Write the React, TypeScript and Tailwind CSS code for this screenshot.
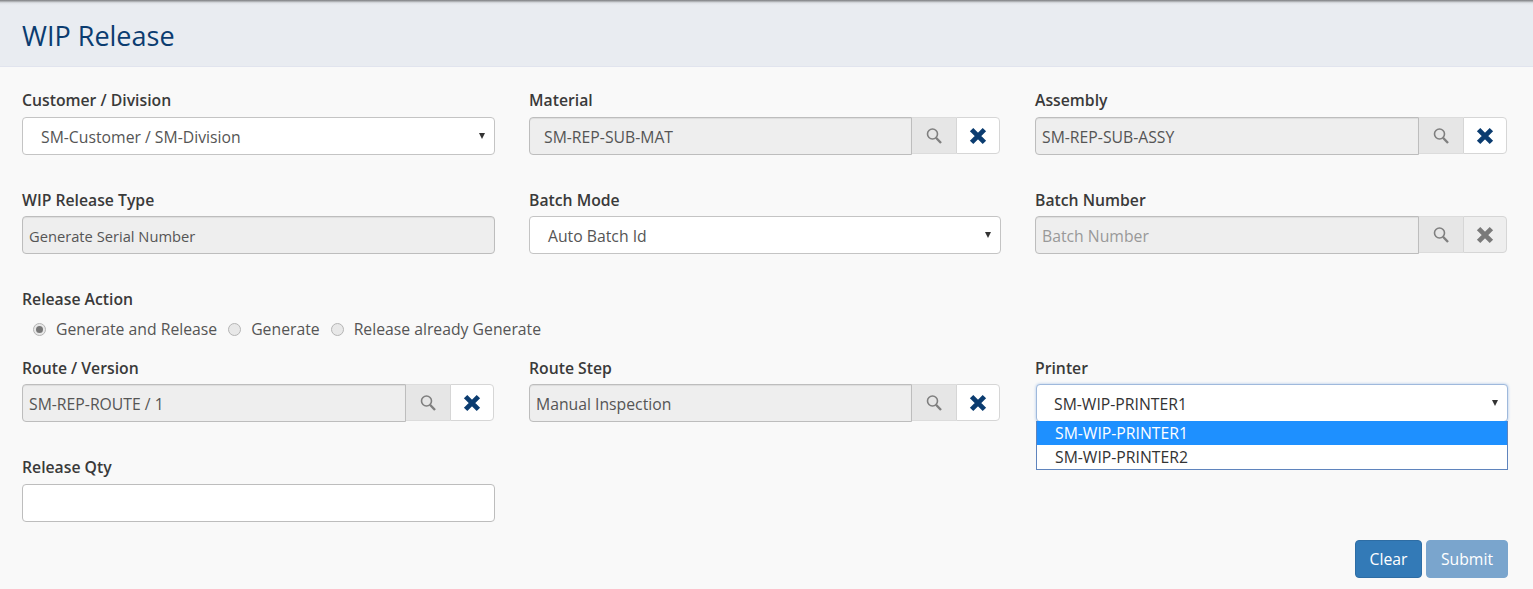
const SearchIcon = () => (
  <svg width="18" height="18" viewBox="0 0 18 18" fill="none" stroke="#7f7f7f">
    <circle cx="7.5" cy="7" r="5" strokeWidth="1.6" />
    <path d="M11 10.7 16 16" strokeWidth="2.4" />
  </svg>
);

const CrossIcon = ({ color }: { color: string }) => (
  <svg width="18" height="18" viewBox="0 0 18 18" fill="none" stroke={color} strokeWidth="4.8">
    <path d="M2.6 2.6 15.4 15.4M15.4 2.6 2.6 15.4" />
  </svg>
);

const Label = ({ children, gap = "mb-[7px]" }: { children: string; gap?: string }) => (
  <label className={`block h-[18px] ${gap} text-[15.75px] leading-[18px] font-semibold text-[#3a3a3a]`}>
    {children}
  </label>
);

const Caret = () => (
  <span className="absolute right-[9px] top-[15px] w-0 h-0 border-x-[3px] border-x-transparent border-t-[6px] border-t-[#333]" />
);

const SelectField = ({ value }: { value: string }) => (
  <div className="relative h-[38px] flex items-center pl-[18px] pt-[3px] bg-white border border-[#c4c4c4] rounded text-[15.75px] text-[#555]">
    {value}
    <Caret />
  </div>
);

const LookupField = ({
  value,
  placeholder,
  disabled,
  padding = "pl-[6px]",
}: {
  value?: string;
  placeholder?: string;
  disabled?: boolean;
  padding?: string;
}) => (
  <div className="flex items-start h-[38px] mr-px">
    <div
      className={`flex-1 h-[38px] flex items-center pt-[3px] bg-[#eeeeee] border border-[#bdbdbd] rounded-l shadow-[inset_0_1px_1px_rgba(0,0,0,0.075)] text-[15.75px] ${padding} ${
        value ? "text-[#555]" : "text-[#999]"
      }`}
    >
      {value ?? placeholder}
    </div>
    <div className="w-[44px] h-[37px] flex items-center justify-center bg-[#e6e6e6] border-y border-[#dcdcdc]">
      <SearchIcon />
    </div>
    <div
      className={`w-[44px] h-[37px] flex items-center justify-center border border-[#d6d6d6] rounded-r ${
        disabled ? "bg-[#eeeeee]" : "bg-white"
      }`}
    >
      <CrossIcon color={disabled ? "#7a7a7a" : "#0b3c70"} />
    </div>
  </div>
);

const Radio = ({ label, checked }: { label: string; checked?: boolean }) => (
  <span className="flex items-center">
    <span className="w-[13px] h-[13px] rounded-full border border-[#b5b5b5] bg-[#e8e8e8] flex items-center justify-center">
      {checked && <span className="w-[7px] h-[7px] rounded-full bg-[#777]" />}
    </span>
    <span className="ml-[10px]">{label}</span>
  </span>
);

export default function App() {
  return (
    <div className="h-[589px] overflow-hidden bg-[#f9f9f9] font-['Open_Sans',sans-serif]">
      <header className="h-[67px] flex items-center px-[22px] pt-[6px] bg-[linear-gradient(#7f8184_0,#9a9c9f_1px,#c4c7cb_2px,#dfe2e7_3px,#e9ecf1_5px)] border-b border-[#e1e4ee]">
        <h1 className="text-[27px] text-[#0b3c70]">WIP Release</h1>
      </header>

      <div className="pl-[22px] pr-[25px] pt-[24px]">
        <div className="grid grid-cols-[473px_472px_1fr] gap-x-[34px]">
          <div>
            <Label gap="mb-[8px]">Customer / Division</Label>
            <SelectField value="SM-Customer / SM-Division" />
          </div>
          <div>
            <Label gap="mb-[8px]">Material</Label>
            <LookupField value="SM-REP-SUB-MAT" padding="pl-[14px]" />
          </div>
          <div>
            <Label gap="mb-[8px]">Assembly</Label>
            <LookupField value="SM-REP-SUB-ASSY" />
          </div>
        </div>

        <div className="grid grid-cols-[473px_472px_1fr] gap-x-[34px] mt-[36px]">
          <div>
            <Label>WIP Release Type</Label>
            <div className="h-[38px] flex items-center pl-[6px] pt-[2px] bg-[#eeeeee] border border-[#bdbdbd] rounded shadow-[inset_0_1px_1px_rgba(0,0,0,0.075)] text-[14.7px] text-[#555]">
              Generate Serial Number
            </div>
          </div>
          <div>
            <Label>Batch Mode</Label>
            <SelectField value="Auto Batch Id" />
          </div>
          <div>
            <Label>Batch Number</Label>
            <LookupField placeholder="Batch Number" disabled />
          </div>
        </div>

        <div className="mt-[36px]">
          <Label>Release Action</Label>
          <div className="flex gap-[11px] pl-[11px] mt-[11px] text-[15.75px] leading-[20px] text-[#555]">
            <Radio label="Generate and Release" checked />
            <Radio label="Generate" />
            <Radio label="Release already Generate" />
          </div>
        </div>

        <div className="grid grid-cols-[473px_472px_1fr] gap-x-[34px] mt-[20px]">
          <div>
            <Label>Route / Version</Label>
            <LookupField value="SM-REP-ROUTE / 1" />
          </div>
          <div>
            <Label>Route Step</Label>
            <LookupField value="Manual Inspection" />
          </div>
          <div className="relative">
            <Label>Printer</Label>
            <div className="relative ml-px h-[38px] flex items-center pl-[17px] pt-[3px] bg-white border border-[#9fb9dc] rounded text-[15.75px] text-[#333] shadow-[0_0_3px_#a8c4e8]">
              SM-WIP-PRINTER1
              <Caret />
            </div>
            <ul className="absolute left-px right-0 top-[62px] bg-white border border-[#5f84bd] border-t-0 text-[15.75px] leading-[24px] text-[#333]">
              <li className="pl-[18px] h-[24px] bg-[#1e90ff] text-white">SM-WIP-PRINTER1</li>
              <li className="pl-[18px] h-[24px]">SM-WIP-PRINTER2</li>
            </ul>
          </div>
        </div>

        <div className="mt-[36px] w-[473px]">
          <Label gap="mb-[8px]">Release Qty</Label>
          <div className="h-[38px] bg-white border border-[#bdbdbd] rounded" />
        </div>

        <div className="flex justify-end gap-[4px] mt-[18px]">
          <button type="button" className="w-[67px] h-[38px] pt-[2px] rounded bg-[#337ab7] border border-[#2e6da4] text-white text-[15.75px]">
            Clear
          </button>
          <button type="button" className="w-[82px] h-[38px] pt-[2px] rounded bg-[#7aa5cd] border border-[#7aa5cd] text-white text-[15.75px]">
            Submit
          </button>
        </div>
      </div>
    </div>
  );
}
